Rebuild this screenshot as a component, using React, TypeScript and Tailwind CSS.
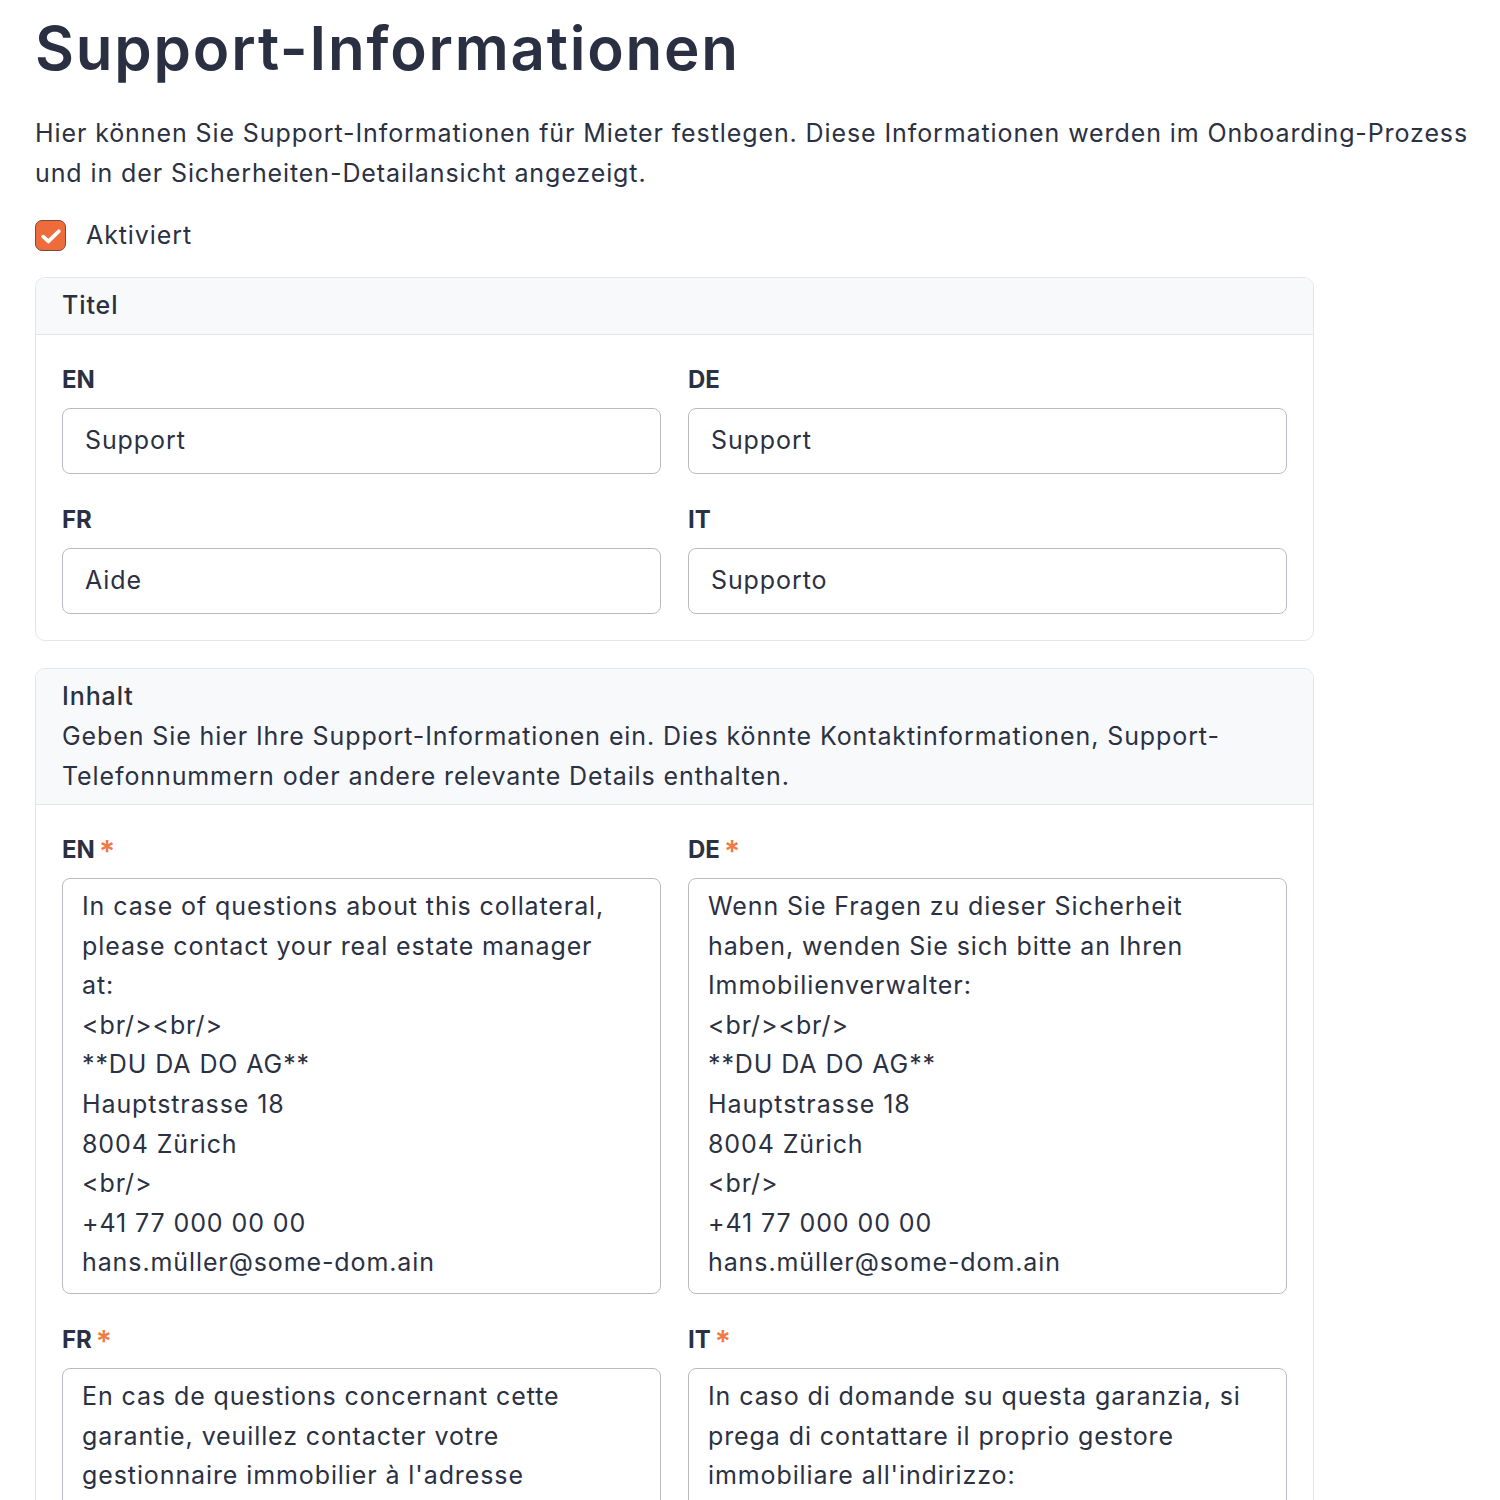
import React from "react";

const contentFields: { lang: string; lines: string[] }[] = [
  {
    lang: "EN",
    lines: [
      "In case of questions about this collateral,",
      "please contact your real estate manager",
      "at:",
      "<br/><br/>",
      "**DU DA DO AG**",
      "Hauptstrasse 18",
      "8004 Zürich",
      "<br/>",
      "+41 77 000 00 00",
      "hans.müller@some-dom.ain",
    ],
  },
  {
    lang: "DE",
    lines: [
      "Wenn Sie Fragen zu dieser Sicherheit",
      "haben, wenden Sie sich bitte an Ihren",
      "Immobilienverwalter:",
      "<br/><br/>",
      "**DU DA DO AG**",
      "Hauptstrasse 18",
      "8004 Zürich",
      "<br/>",
      "+41 77 000 00 00",
      "hans.müller@some-dom.ain",
    ],
  },
  {
    lang: "FR",
    lines: [
      "En cas de questions concernant cette",
      "garantie, veuillez contacter votre",
      "gestionnaire immobilier à l'adresse",
      "suivante :",
      "<br/><br/>",
      "**DU DA DO AG**",
      "Hauptstrasse 18",
      "8004 Zürich",
      "<br/>",
      "+41 77 000 00 00",
      "hans.müller@some-dom.ain",
    ],
  },
  {
    lang: "IT",
    lines: [
      "In caso di domande su questa garanzia, si",
      "prega di contattare il proprio gestore",
      "immobiliare all'indirizzo:",
      "<br/><br/>",
      "**DU DA DO AG**",
      "Hauptstrasse 18",
      "8004 Zürich",
      "<br/>",
      "+41 77 000 00 00",
      "hans.müller@some-dom.ain",
    ],
  },
];

const titleFields = [
  { lang: "EN", value: "Support" },
  { lang: "DE", value: "Support" },
  { lang: "FR", value: "Aide" },
  { lang: "IT", value: "Supporto" },
];

function Label({ text, required }: { text: string; required?: boolean }) {
  return (
    <div className="mb-[10px] flex h-[38px] items-center gap-[4px] pt-[2px] text-[24px] leading-[36px] font-bold tracking-[0px] text-[#2b3142]">
      <span>{text}</span>
      {required && (
        <span className="relative top-[1px] text-[30px] leading-[30px] font-semibold text-[#f07a45]">*</span>
      )}
    </div>
  );
}

export default function App() {
  return (
    <div className="min-h-[1500px] bg-white px-[35px] pt-[12px] pb-[40px] font-['Inter','Noto_Sans',sans-serif] text-[#2b3142] tracking-[0.9px]">
      <h1 className="h-[72px] text-[60px] leading-[72px] font-semibold tracking-[1.8px] text-[#2a3041]">
        Support-Informationen
      </h1>

      <p className="mt-[29px] whitespace-nowrap text-[25px] leading-[40px] text-[#2b3142]">
        Hier können Sie Support-Informationen für Mieter festlegen. Diese Informationen werden im Onboarding-Prozess
        <br />
        und in der Sicherheiten-Detailansicht angezeigt.
      </p>

      <label className="mt-[27px] flex h-[31px] items-center gap-[20px]">
        <span className="flex h-[31px] w-[31px] items-center justify-center rounded-[7px] border border-[#7a4a38] bg-[#ee6c3c]">
          <svg viewBox="0 0 24 24" className="h-[26px] w-[26px]" fill="none" stroke="white" strokeWidth="3.5" strokeLinecap="round" strokeLinejoin="round">
            <path d="M4.8 12.6L9.6 17L19.2 7.6" />
          </svg>
        </span>
        <span className="text-[25px] leading-[31px]">Aktiviert</span>
      </label>

      <section className="mt-[26px] w-[1279px] overflow-hidden rounded-[10px] border border-[#e2e6ea]">
        <div className="flex h-[57px] items-center border-b border-[#e2e6ea] bg-[#f8f9fb] px-[26px] pb-[2px] text-[25px] leading-[40px] font-medium">
          Titel
        </div>
        <div className="grid grid-cols-2 gap-x-[27px] gap-y-[26px] px-[26px] pt-[25px] pb-[26px]">
          {titleFields.map((f) => (
            <div key={f.lang}>
              <Label text={f.lang} />
              <div className="flex h-[66px] items-center rounded-[8px] border border-[#b8bcc2] bg-white px-[22px] text-[25px]">
                {f.value}
              </div>
            </div>
          ))}
        </div>
      </section>

      <section className="mt-[27px] w-[1279px] overflow-hidden rounded-[10px] border border-[#e2e6ea]">
        <div className="h-[136px] border-b border-[#e2e6ea] bg-[#f8f9fb] px-[26px] pt-[7px] text-[25px] leading-[40px]">
          <div className="font-medium">Inhalt</div>
          <div className="whitespace-nowrap">
            Geben Sie hier Ihre Support-Informationen ein. Dies könnte Kontaktinformationen, Support-
            <br />
            Telefonnummern oder andere relevante Details enthalten.
          </div>
        </div>
        <div className="grid grid-cols-2 gap-x-[27px] gap-y-[26px] px-[26px] pt-[25px] pb-[26px]">
          {contentFields.map((f) => (
            <div key={f.lang}>
              <Label text={f.lang} required />
              <div className="rounded-[8px] border border-[#b8bcc2] bg-white px-[19px] pt-[8px] pb-[10px] text-[25px] leading-[39.6px] whitespace-nowrap">
                {f.lines.map((l, i) => (
                  <div key={i}>{l}</div>
                ))}
              </div>
            </div>
          ))}
        </div>
      </section>
    </div>
  );
}
